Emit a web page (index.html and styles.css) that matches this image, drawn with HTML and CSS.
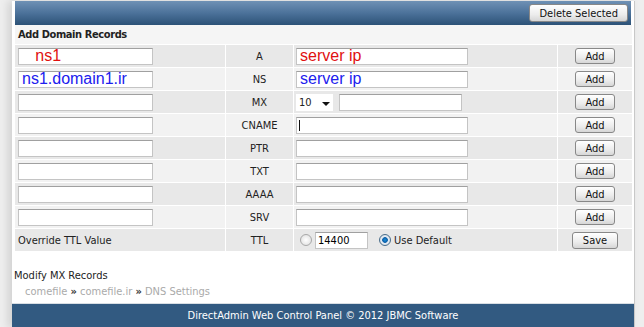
FILE: index.html
```html
<!DOCTYPE html>
<html lang="en">
<head>
    <meta charset="UTF-8">
    <title>DNS Settings</title>
    <link rel="stylesheet" href="styles.css">
</head>
<body>

<div class="page">
    <!-- top bar -->
    <div class="topbar">
        <button class="btn">Delete Selected</button>
    </div>

    <div class="section-title">Add Domain Records</div>

    <table class="records">
        <tr class="odd">
            <td class="c1"><input type="text" class="name big red" value="   ns1"></td>
            <td class="c2">A</td>
            <td class="c3"><input type="text" class="value big red" value="server ip"></td>
            <td class="c4"><button class="btn">Add</button></td>
        </tr>
        <tr class="even">
            <td class="c1"><input type="text" class="name big blue" value="ns1.domain1.ir"></td>
            <td class="c2">NS</td>
            <td class="c3"><input type="text" class="value big blue" value="server ip"></td>
            <td class="c4"><button class="btn">Add</button></td>
        </tr>
        <tr class="odd">
            <td class="c1"><input type="text" class="name"></td>
            <td class="c2">MX</td>
            <td class="c3">
                <div class="mx">
                    <span class="select">10 <span class="arrow"></span></span>
                    <input type="text" class="mxval">
                </div>
            </td>
            <td class="c4"><button class="btn">Add</button></td>
        </tr>
        <tr class="even">
            <td class="c1"><input type="text" class="name"></td>
            <td class="c2">CNAME</td>
            <td class="c3">
                <div class="focus-wrap">
                    <input type="text" class="value">
                    <span class="caret"></span>
                </div>
            </td>
            <td class="c4"><button class="btn">Add</button></td>
        </tr>
        <tr class="odd">
            <td class="c1"><input type="text" class="name"></td>
            <td class="c2">PTR</td>
            <td class="c3"><input type="text" class="value"></td>
            <td class="c4"><button class="btn">Add</button></td>
        </tr>
        <tr class="even">
            <td class="c1"><input type="text" class="name"></td>
            <td class="c2">TXT</td>
            <td class="c3"><input type="text" class="value"></td>
            <td class="c4"><button class="btn">Add</button></td>
        </tr>
        <tr class="odd">
            <td class="c1"><input type="text" class="name"></td>
            <td class="c2">AAAA</td>
            <td class="c3"><input type="text" class="value"></td>
            <td class="c4"><button class="btn">Add</button></td>
        </tr>
        <tr class="even">
            <td class="c1"><input type="text" class="name"></td>
            <td class="c2">SRV</td>
            <td class="c3"><input type="text" class="value"></td>
            <td class="c4"><button class="btn">Add</button></td>
        </tr>
        <tr class="odd ttl">
            <td class="c1 label">Override TTL Value</td>
            <td class="c2">TTL</td>
            <td class="c3">
                <div class="ttl-opts">
                    <span class="radio"></span>
                    <input type="text" class="ttlval" value="14400">
                    <span class="radio on"></span>
                    <span>Use Default</span>
                </div>
            </td>
            <td class="c4"><button class="btn save">Save</button></td>
        </tr>
    </table>

    <div class="modify">Modify MX Records</div>
    <div class="crumbs">comefile <b>»</b> comefile.ir <b>»</b> DNS Settings</div>

    <div class="footer">DirectAdmin Web Control Panel © 2012 JBMC Software</div>
</div>

</body>
</html>
```

FILE: styles.css
```css
body {
    margin: 0;
    padding: 0;
    background-color: #eeeeee;
    font-family: "DejaVu Sans Condensed", "DejaVu Sans", sans-serif;
    font-size: 11px;
    color: #222;
}
.page {
    margin-left: 12px;
    width: 622px;
    height: 327px;
    background-color: #fff;
    box-shadow: -4px 0 8px rgba(0, 0, 0, 0.12);
    border-right: 1px solid #c8c8c8;
    position: relative;
}
.topbar {
    margin: 1px 3px 0 3px;
    height: 24px;
    background: linear-gradient(#6f91b5, #4c729a 50%, #2c5277);
    display: flex;
    justify-content: flex-end;
    align-items: center;
    padding-right: 3px;
}
.btn {
    font-family: "DejaVu Sans Condensed", "DejaVu Sans", sans-serif;
    font-size: 11px;
    color: #111;
    background: linear-gradient(#ffffff, #ececec 60%, #d6d6d6);
    border: 1px solid #888;
    border-radius: 3px;
    padding: 0 9px;
    height: 16px;
    line-height: 13px;
}
.topbar .btn {
    height: 18px;
    padding: 0 9px;
}
.section-title {
    margin: 0 2px 0 3px;
    height: 19px;
    line-height: 19px;
    padding-left: 3px;
    background-color: #f5f5f5;
    font-weight: bold;
    letter-spacing: -0.4px;
}
.records {
    table-layout: fixed;
    border-collapse: separate;
    border-spacing: 1px;
    margin-left: 2px;
    width: 619px;
}
.records td {
    box-sizing: border-box;
    height: 22px;
    padding: 0;
}
.odd td {
    background-color: #e8e8e8;
}
.even td {
    background-color: #f2f2f2;
}
.records td.c1 {
    width: 210px;
    padding-left: 3px;
}
.records td.c2 {
    width: 67px;
    text-align: center;
}
.records td.c3 {
    width: 263px;
    padding-left: 2px;
}
.records td.c4 {
    width: 74px;
    text-align: center;
}
input[type="text"] {
    box-sizing: border-box;
    height: 17px;
    border: 1px solid #c4c4c4;
    border-top-color: #a0a0a0;
    background: #fff;
    padding: 0 2px;
    font-family: "DejaVu Sans Condensed", "DejaVu Sans", sans-serif;
    font-size: 11px;
    display: block;
}
.name {
    width: 135px;
}
.value {
    width: 172px;
}
.big {
    font-family: "Liberation Sans", Arial, sans-serif !important;
    font-size: 16px !important;
    padding-left: 3px !important;
    line-height: 15px;
}
.red {
    color: #e01010;
}
.blue {
    color: #2020ee;
}
.focus-wrap {
    position: relative;
}
.caret {
    position: absolute;
    left: 3px;
    top: 3px;
    width: 1px;
    height: 11px;
    background-color: #111;
}
.mx {
    display: flex;
    align-items: center;
    gap: 6px;
}
.select {
    box-sizing: border-box;
    width: 37px;
    height: 17px;
    background: #fff;
    padding-left: 3px;
    line-height: 17px;
    position: relative;
}
.arrow {
    position: absolute;
    right: 3px;
    top: 8px;
    border-left: 4px solid transparent;
    border-right: 4px solid transparent;
    border-top: 4px solid #111;
}
.mxval {
    width: 123px;
}
.ttl-opts {
    display: flex;
    align-items: center;
    gap: 3px;
    padding-left: 4px;
}
.ttlval {
    width: 53px;
}
.radio {
    box-sizing: border-box;
    width: 12px;
    height: 12px;
    border-radius: 50%;
    border: 1px solid #a8a8a8;
    background: radial-gradient(#fff, #dcdcdc);
}
.radio.on {
    margin-left: 8px;
    border-color: #4a6d8a;
    background: radial-gradient(circle, #1a8fd8 0, #0c5ea8 35%, #e8eef4 45%, #c8d4de 100%);
}
.records .save {
    padding: 0 10px;
    height: 17px;
}
.modify {
    margin-top: 17px;
    padding-left: 2px;
}
.crumbs {
    padding-left: 13px;
    margin-top: 3px;
    color: #aaaaaa;
}
.crumbs b {
    color: #333;
    font-weight: bold;
}
.footer {
    position: absolute;
    left: 0;
    right: 0;
    bottom: 0;
    height: 24px;
    line-height: 24px;
    border-top: 1px solid #d8dee4;
    background-color: #325a81;
    color: #fff;
    text-align: center;
}
```
